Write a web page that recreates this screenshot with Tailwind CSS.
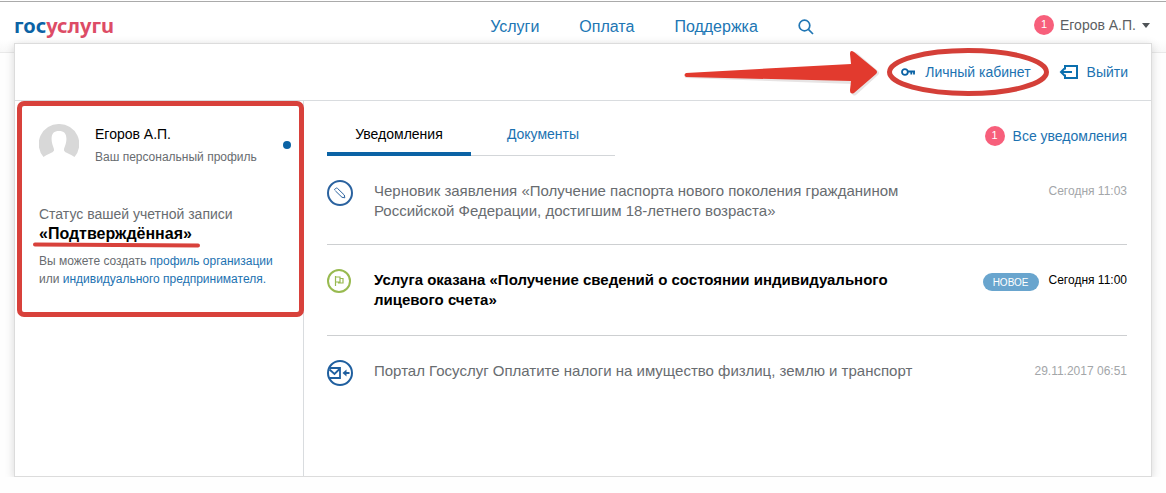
<!DOCTYPE html>
<html lang="ru">
<head>
<meta charset="utf-8">
<meta name="viewport" content="width=device-width, initial-scale=1">
<title>Госуслуги</title>
<script src="https://cdn.jsdelivr.net/npm/@tailwindcss/browser@4"></script>
</head>
<body class="bg-[#fefefe] font-['Liberation_Sans',Arial,sans-serif] text-[#686c70]">
<header class="mt-px flex h-[52px] items-center border-t border-b border-t-[#aaaaaa] border-b-[#e9e9e9] bg-linear-to-b from-white from-75% to-[#f8f8f8] pr-4 pl-[14px]">
  <a href="#" aria-label="Госуслуги" class="mr-auto w-[220px] pb-[3px] font-['Noto_Sans',sans-serif] text-xl leading-6 font-bold text-[#0b63a5]">гос<span class="text-[#dd4c66]">услугu</span></a>
  <nav class="mr-auto ml-auto flex items-center gap-10 pl-20 text-base text-[#2076b4]">
    <a href="#">Услуги</a>
    <a href="#">Оплата</a>
    <a href="#">Поддержка</a>
    <button type="button" aria-label="Поиск">
      <svg class="block size-4" viewBox="0 0 16 16" fill="none" stroke="#2076b4" stroke-width="1.7"><circle cx="6.500" cy="6.500" r="5.300"/><path d="M10.400 10.400L15 15"/></svg>
    </button>
  </nav>
  <button type="button" class="ml-auto flex w-[160px] items-center justify-end gap-[6px] pb-1 text-sm text-[#5c5f63]">
    <span class="flex size-5 items-center justify-center rounded-full bg-[#f75f7b] text-[11px] text-white">1</span>
    <span>Егоров А.П.</span>
    <svg class="h-[5px] w-2" viewBox="0 0 8 5"><path d="M0 0h8L4 5z" fill="#4f5357"/></svg>
  </button>
</header>

<main class="relative mx-[14px] -mt-[10px] border border-[#dcdcdc] bg-white shadow-[0_2px_9px_rgba(0,0,0,0.16)]">
  <div class="flex h-[57px] items-center justify-end gap-7 border-b border-[#d9dcdf] pr-[23px] text-sm text-[#1c72b1]">
    <div class="relative">
      <a href="#" class="flex items-center gap-[10px]">
        <svg class="h-2 w-[14px]" viewBox="0 0 14 8" fill="none" stroke="#0b63a5" stroke-width="1.800"><circle cx="3.900" cy="4" r="2.900"/><path d="M7 3.500h7M10.300 4v2.500M13 4v2.500"/></svg>
        <span>Личный кабинет</span>
      </a>
      <svg class="pointer-events-none absolute -top-[14px] -left-[218px] h-12 w-[368px]" viewBox="0 0 368 48" aria-hidden="true">
        <path d="M3 25.500L170 17.500L168 6Q170 1 174 4L195 22Q197 24 195 26L173 46Q169 48 169 43L170 35L3 29Q0 27 3 25.500Z" fill="#b9b3b3" opacity=".35" transform="translate(0 1)"/>
        <path d="M3 25L168 16L167 6Q167 1 171 4L193 22Q195 24 193 26L171 45Q167 47 167 42L168 33L3 29Q0 27 3 25Z" fill="#e23a2e"/>
        <ellipse cx="285" cy="24" rx="78.500" ry="21.500" fill="none" stroke="#d43f38" stroke-width="5"/>
      </svg>
    </div>
    <a href="#" class="flex items-center gap-2">
      <svg class="h-[14px] w-5" viewBox="0 0 20 14" fill="none" stroke="#0b6fae" stroke-width="2"><path d="M6 4.500V1h12v12H6V9.500M13 7H2M6 3L2 7l4 4"/></svg>
      <span>Выйти</span>
    </a>
  </div>

  <div class="flex min-h-[375px]">
    <aside class="relative w-[289px] shrink-0 border-r border-[#d9dcdf] px-6 pt-[23px]">
      <div class="pointer-events-none absolute top-0 -right-px left-[2px] h-[216px] rounded-[7px] border-5 border-[#d8413b]"></div>
      <div class="flex items-start">
        <svg class="size-10 shrink-0" viewBox="0 0 40 40"><path d="M20 0a20 20 0 0 0-15.500 33c4-3 9.500-4 10.500-6.500.2-3-2.200-5.500-2.400-11C12.400 9.500 15 7 20 7s7.600 2.500 7.400 8.500c-.2 5.500-2.600 8-2.400 11 1 2.500 6.500 3.500 10.500 6.500A20 20 0 0 0 20 0z" fill="#d8d8d8"/></svg>
        <div class="ml-4 flex-1">
          <p class="text-sm leading-5 text-black">Егоров А.П.</p>
          <p class="mt-[3px] text-xs leading-5">Ваш персональный профиль</p>
        </div>
        <span class="-mr-3 mt-[17px] size-2 shrink-0 rounded-full bg-[#0b63a5]"></span>
      </div>
      <p class="mt-[37px] text-sm leading-5">Статус вашей учетной записи</p>
      <div class="relative w-fit">
        <p class="text-base leading-5 font-bold text-black">«Подтверждённая»</p>
        <svg class="absolute top-[18px] -left-[6px] h-[6px] w-[167px]" viewBox="0 0 167 6" aria-hidden="true"><path d="M2 2.500L165 3.500" stroke="#d8413b" stroke-width="4" stroke-linecap="round"/></svg>
      </div>
      <p class="mt-2 text-xs leading-[18px] whitespace-nowrap">Вы можете создать <a href="#" class="text-[#1c72b1]">профиль организации</a><br>или <a href="#" class="text-[#1c72b1]">индивидуального предпринимателя.</a></p>
    </aside>

    <section class="min-w-0 flex-1 pr-6 pl-[23px]">
      <div class="flex h-[55px] items-end justify-between">
        <div class="flex text-sm">
          <button type="button" class="h-9 w-36 border-b-4 border-[#0b63a5] pb-1 text-black">Уведомления</button>
          <button type="button" class="h-9 w-36 border-b border-[#d3d6d9] pb-[7px] text-[#1c72b1]">Документы</button>
        </div>
        <a href="#" class="mb-[10px] flex items-center gap-2 text-sm text-[#1c72b1]">
          <span class="flex size-5 items-center justify-center rounded-full bg-[#f75f7b] text-[11px] text-white">1</span>
          <span>Все уведомления</span>
        </a>
      </div>
      <ul>
        <li class="flex h-[89px] items-start border-b border-[#cdcfd1] pt-6">
          <svg class="size-[26px] shrink-0" viewBox="0 0 26 26" fill="none" stroke="#2a629f"><circle cx="13" cy="13" r="12" stroke-width="2"/><path d="M7.700 10.200Q7.300 9 8.500 8.500Q9.600 7.600 10.500 8.400L17.300 15L17.800 17.800L15 17.300L8.300 10.800"/></svg>
          <a href="#" class="mt-px ml-[21px] w-[550px] text-[15px] leading-5">Черновик заявления «Получение паспорта нового поколения гражданином Российской Федерации, достигшим 18-летнего возраста»</a>
          <time class="mt-px ml-auto text-xs leading-5 text-[#a3a6a9]">Сегодня 11:03</time>
        </li>
        <li class="flex h-[91px] items-start border-b border-[#cdcfd1] pt-6">
          <svg class="size-6 shrink-0" viewBox="0 0 24 24" fill="none" stroke="#98ba50"><circle cx="12" cy="12" r="11" stroke-width="2"/><path d="M8.500 7v10M8.500 8h4.500v5H8.500M13 9.500h3v4.500h-4.500v-1" stroke-width="1.200"/></svg>
          <a href="#" class="mt-px ml-[23px] w-[550px] text-[15px] leading-5 font-bold text-black">Услуга оказана «Получение сведений о состоянии индивидуального лицевого счета»</a>
          <span class="mt-1 ml-auto flex h-[18px] w-14 items-center justify-center rounded-full bg-[#69a5ce] text-[10px] text-white">НОВОЕ</span>
          <time class="mt-px ml-[10px] text-xs leading-5 text-black">Сегодня 11:00</time>
        </li>
        <li class="flex items-start pt-6">
          <svg class="size-[26px] shrink-0" viewBox="0 0 26 26" fill="none" stroke="#1f5f9f" stroke-width="2"><circle cx="13" cy="13" r="12"/><path d="M2.500 8H13v10H2.500M2.500 9.500L7.500 14l5-5" stroke-width="1.800"/><path d="M22.500 13h-4"/><path d="M15.500 13l4-3.500v7z" fill="#1f5f9f" stroke="none"/></svg>
          <a href="#" class="mt-px ml-[21px] w-[550px] text-[15px] leading-5">Портал Госуслуг Оплатите налоги на имущество физлиц, землю и транспорт</a>
          <time class="mt-px ml-auto text-xs leading-5 text-[#a3a6a9]">29.11.2017 06:51</time>
        </li>
      </ul>
    </section>
  </div>
</main>
</body>
</html>
